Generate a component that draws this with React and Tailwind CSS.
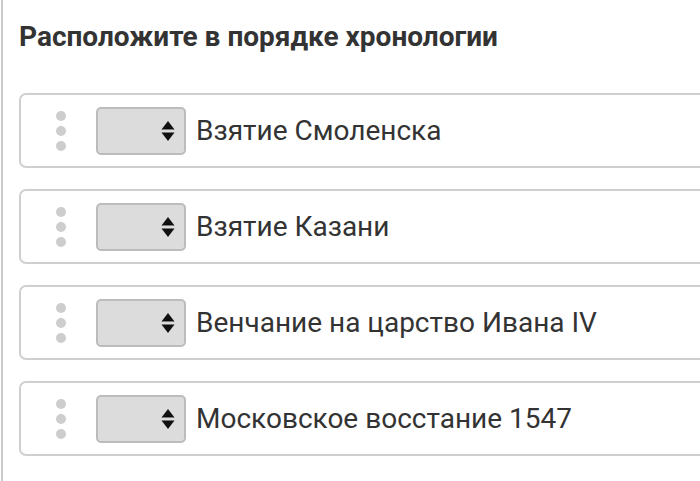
import React from "react";

const items = [
  "Взятие Смоленска",
  "Взятие Казани",
  "Венчание на царство Ивана IV",
  "Московское восстание 1547",
];

function Arrows() {
  return (
    <svg width="14" height="20" viewBox="0 0 14 20" className="block">
      <path d="M7 0 L13.5 8.5 L0.5 8.5 Z" fill="#111" />
      <path d="M7 20 L13.5 11.5 L0.5 11.5 Z" fill="#111" />
    </svg>
  );
}

function Card({ text }) {
  return (
    <div className="flex h-[75px] w-[720px] shrink-0 items-center rounded-[7px] border-2 border-[#cfcfcf] bg-white">
      <div className="ml-[35px] flex w-[10px] flex-col gap-[5px]">
        <div className="h-[10px] w-[10px] rounded-full bg-[#cdcdcd]" />
        <div className="h-[10px] w-[10px] rounded-full bg-[#cdcdcd]" />
        <div className="h-[10px] w-[10px] rounded-full bg-[#cdcdcd]" />
      </div>
      <div className="ml-[30px] flex h-[48px] w-[90px] items-center justify-end rounded-[5px] border-2 border-[#bcbcbc] bg-[#dcdcdc] pr-[9px]">
        <Arrows />
      </div>
      <div className="ml-[10px] text-[28px] leading-none text-[#333333]" style={{ fontFamily: "Roboto, sans-serif" }}>
        {text}
      </div>
    </div>
  );
}

export default function App() {
  return (
    <div className="h-[481px] w-[700px] overflow-hidden bg-white pl-px">
      <div className="flex h-full flex-col border-l-2 border-[#cacaca] pl-[16px]">
        <div
          className="mt-[23px] text-[28px] font-bold leading-[28px] text-[#333333]"
          style={{ fontFamily: "Roboto, sans-serif" }}
        >
          Расположите в порядке хронологии
        </div>
        <div className="mt-[42px] flex flex-col gap-[21px]">
          {items.map((t) => (
            <Card key={t} text={t} />
          ))}
        </div>
      </div>
    </div>
  );
}
